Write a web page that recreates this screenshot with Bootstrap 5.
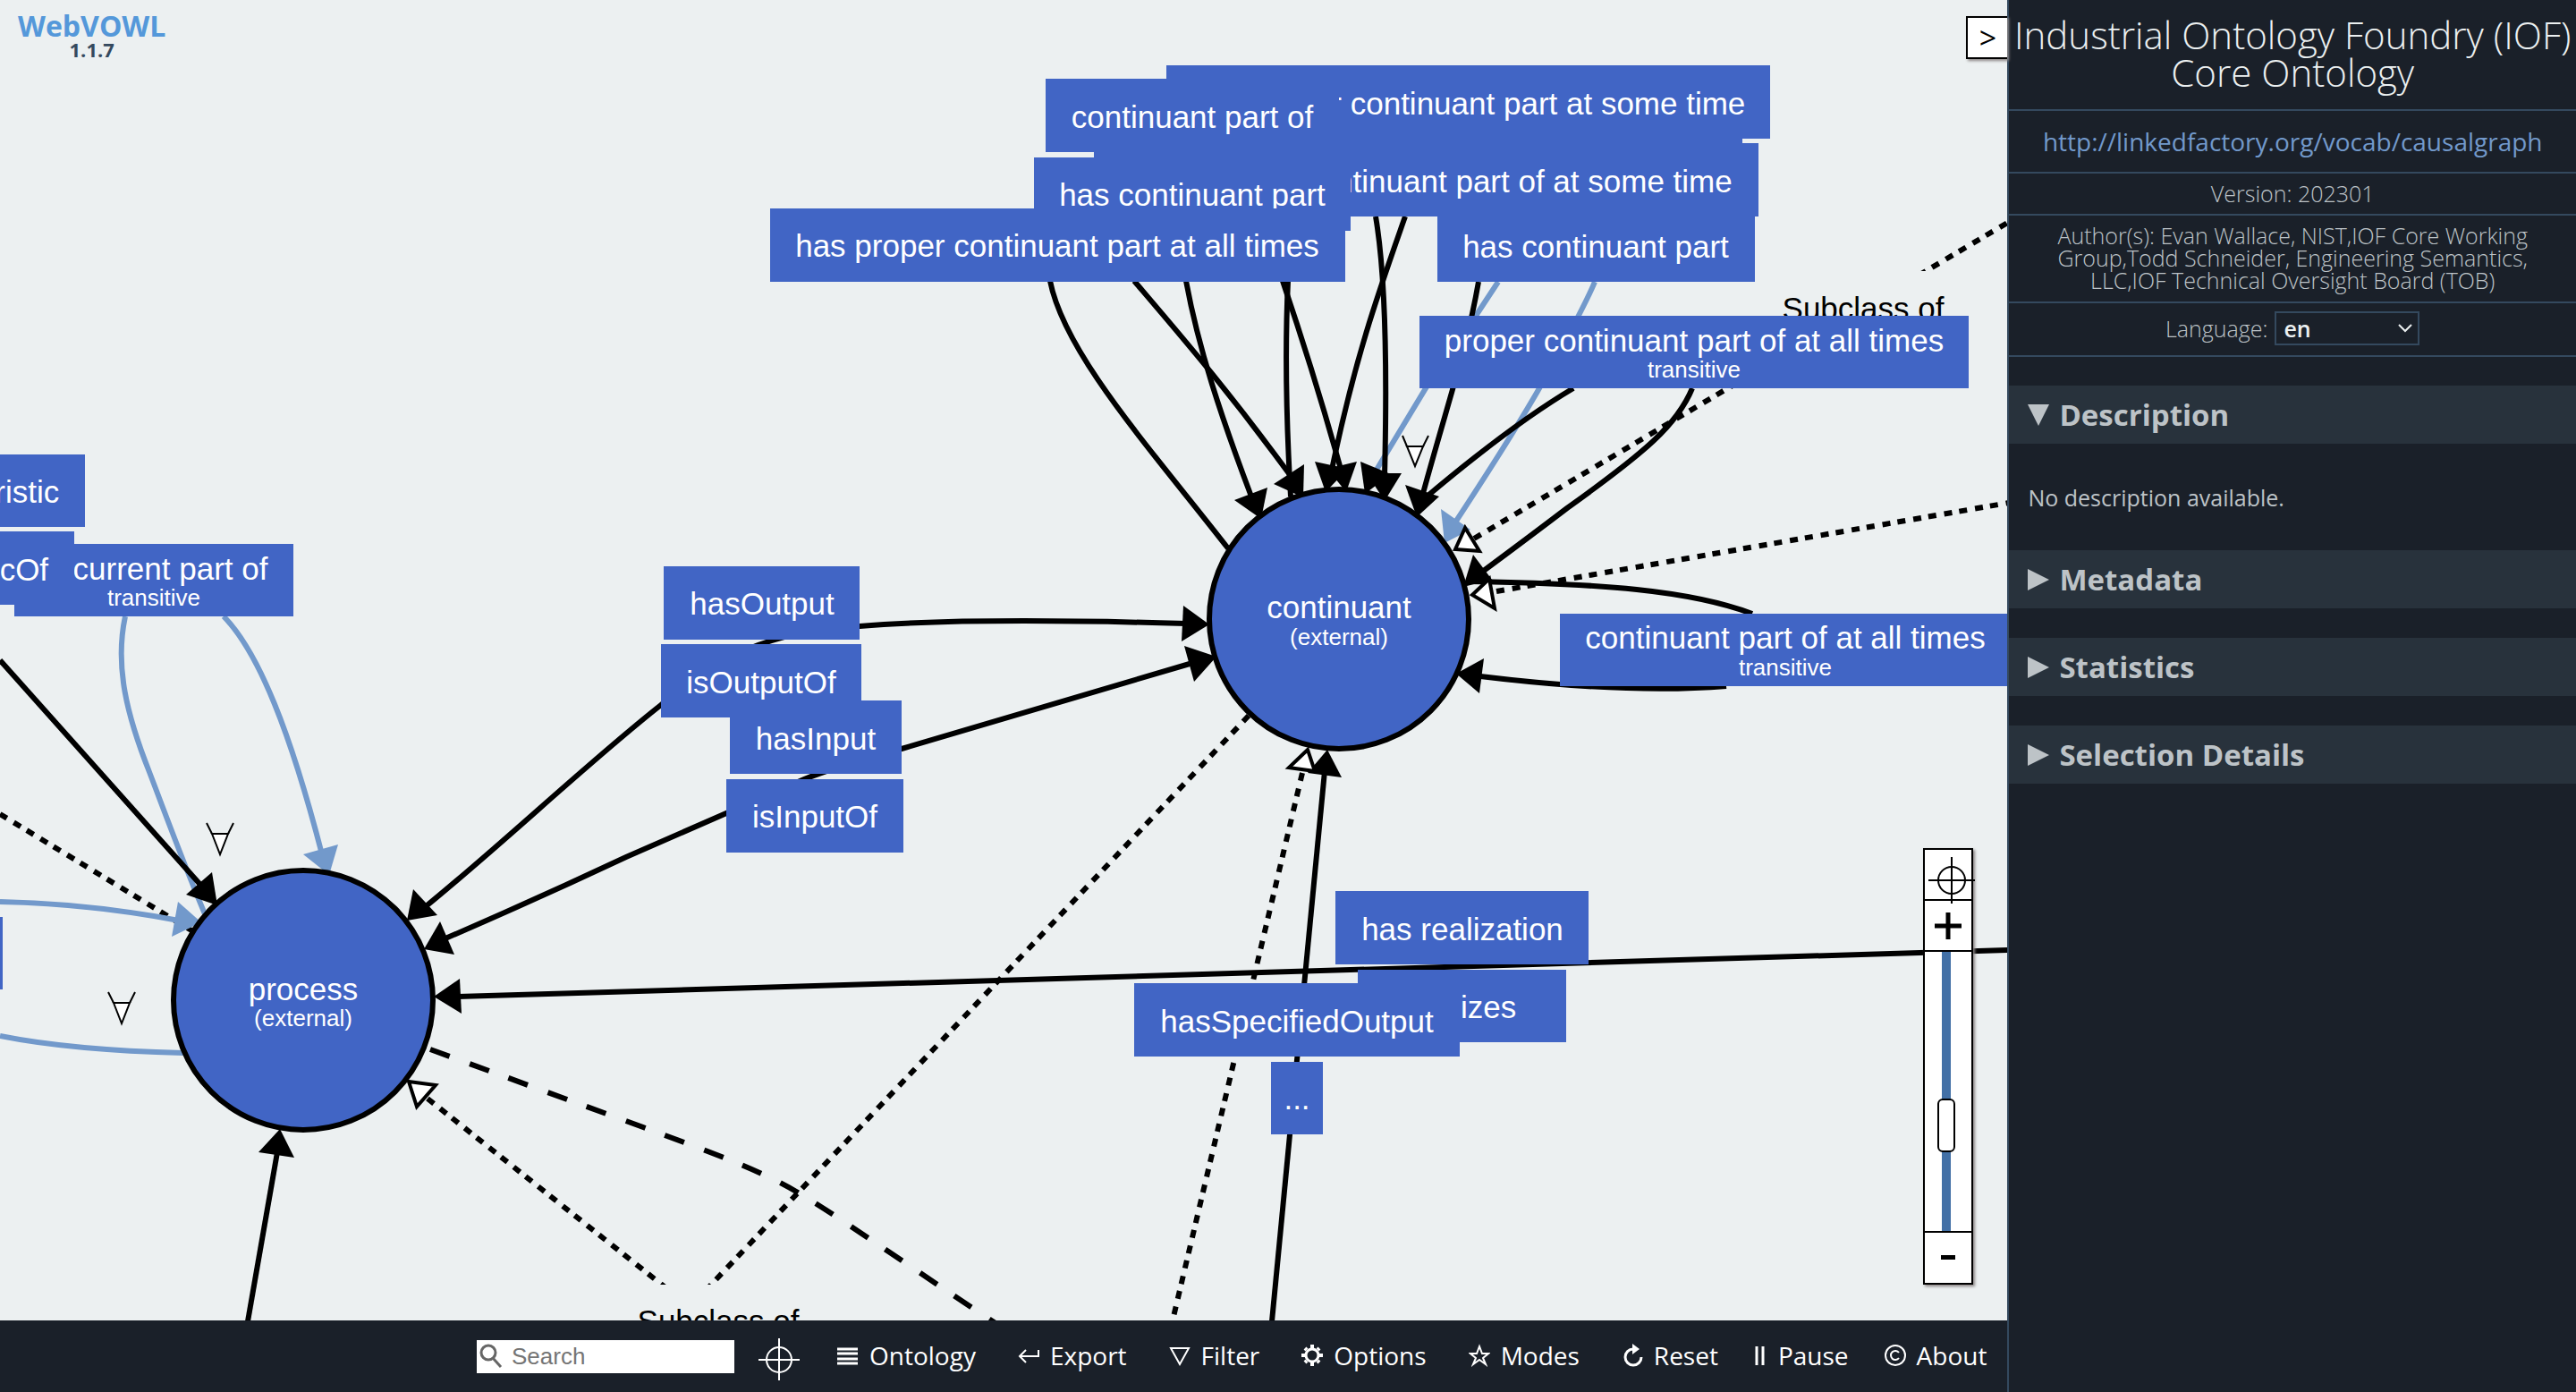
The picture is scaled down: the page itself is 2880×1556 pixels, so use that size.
<!DOCTYPE html>
<html lang="en">
<head>
<meta charset="utf-8">
<meta name="viewport" content="width=device-width, initial-scale=1">
<title>WebVOWL</title>
<link rel="stylesheet" href="https://cdn.jsdelivr.net/npm/bootstrap@5.3.0/dist/css/bootstrap.min.css">
<style>
  body { font-family: "Open Sans", "Noto Sans", sans-serif; background: #1a2029; }
  .canvas-area { background: #ecf0f1; min-width: 0; }
  .vowl-graph { display: block; width: 100%; height: 100%; font-family: "Liberation Sans", Arial, sans-serif; font-size: 35px; text-anchor: middle; }
  .vowl-graph .edge path { fill: none; stroke: #000; stroke-width: 6; }
  .vowl-graph .edge .import { stroke: #7299cb; }
  .vowl-graph .edge .sub { stroke-dasharray: 9 9 9 8; }
  .vowl-graph .edge .disjoint { stroke-dasharray: 23 24 23 23; }
  .vowl-graph .open { fill: #fff; stroke: #000; stroke-width: 4; }
  .vowl-graph .quant { fill: #fff; stroke: #000; stroke-width: 2; }
  .vowl-graph circle { fill: #4165c5; stroke: #000; stroke-width: 6; }
  .vowl-graph rect { fill: #4165c5; }
  .vowl-graph .lbl text { fill: #fff; }
  .vowl-graph .plain rect { fill: #ecf0f1; }
  .vowl-graph .tiny { font-size: 26px; }
  .brand { top: 13px; left: 20px; line-height: 1; }
  .brand a { font-size: 32px; font-weight: 700; color: #5498da; line-height: 32px; }
  .brand span { font-size: 22px; font-weight: 700; color: #34495e; line-height: 20px; }
  .toggle-btn { top: 18px; right: 0; width: 46px; height: 48px; background: #fff; border: 2px solid #000; border-right: 0; box-shadow: 2px 2px 3px #8a8484; font-size: 34px; line-height: 1; color: #000; }
  .zoomer { top: 948px; right: 38px; width: 56px; background: #fff; border: 2px solid #000; box-shadow: 2px 2px 3px #8a8484; }
  .zoomer button { height: 57px; background: none; border: 0; border-bottom: 2px solid #000; color: #000; line-height: 0; }
  .zoomer .zoom-out { border-bottom: 0; border-top: 2px solid #000; height: 58px; }
  .zoomer svg { overflow: visible; }
  .track-box { height: 312px; }
  .track-box input { position: absolute; left: 24px; top: 50%; width: 312px; height: 24px; margin: 0; appearance: none; -webkit-appearance: none; background: none; transform: translate(-50%, -50%) rotate(-90deg); }
  .track-box input::-webkit-slider-runnable-track { height: 10px; background: #4270a6; }
  .track-box input::-webkit-slider-thumb { -webkit-appearance: none; width: 60px; height: 20px; margin-top: -5px; background: #fff; border: 2px solid #000; border-radius: 6px; }
  .menu-bar { height: 80px; background: #1a2029; padding-right: 23px; }
  .search-box { position: relative; width: 288px; }
  .search-box input { width: 100%; height: 37px; border: 0; border-radius: 0; padding: 0 0 0 39px; font: 26px "Liberation Sans", Arial, sans-serif; background: #fff; }
  .search-box input::placeholder { color: #757575; opacity: 1; }
  .search-box svg { position: absolute; left: 3px; top: 4px; }
  .locate { margin: 0 42px 0 27px; background: none; border: 0; padding: 6px 0 0; line-height: 0; }
  .menu-list { gap: 47px; padding-bottom: 2px; }
  .menu-list.late { gap: 40px; margin-left: 41px; }
  .menu-list a { color: #fff; font-size: 28px; line-height: 40px; gap: 12px; }
  .menu-list svg { fill: none; stroke: #fff; stroke-width: 2; }
  .side { flex: 0 0 calc(22% + 2px); background: #1a2029; border-left: 2px solid #34495e; color: #bdc3c7; }
  .side .cell { border-bottom: 2px solid #34495e; text-align: center; }
  .side h1 { font-size: 42px; font-weight: 300; line-height: 42px; color: #ecf0f1; margin: 0; padding: 18px 0 20px; }
  .side .iri a { color: #7299cb; font-size: 28px; line-height: 68px; }
  .side .fine { font-size: 25px; font-weight: 300; line-height: 25px; }
  .side .ver { padding: 10px 0; }
  .side .auth { padding: 10px 40px 11px; }
  .side .lang { padding: 9px 0 11px; gap: 8px; }
  .side select { width: 162px; height: 38px; appearance: none; -webkit-appearance: none; border: 2px solid #34495e; background: #1a2029; color: #ecf0f1; font: 600 25px/1 "Open Sans", sans-serif; padding: 0 8px; }
  .pick { position: relative; }
  .pick svg { position: absolute; right: 8px; top: 13px; pointer-events: none; }
  .panel-head { width: 100%; height: 65px; border: 0; background: #28323c; color: #bdc3c7; font-size: 33px; font-weight: 700; line-height: 1; padding: 0 0 0 21px; gap: 11px; }
  .acc { gap: 33px; margin-top: 32px; }
  .panel-text { font-size: 25px; line-height: 40px; padding: 40px 21px 39px; margin: 0; }
  .acc .first { display: block; margin-bottom: -33px; }
</style>
</head>
<body>
<div class="d-flex vh-100 overflow-hidden">
  <main class="d-flex flex-column flex-grow-1 canvas-area position-relative">
    <div class="flex-grow-1 overflow-hidden">
      <svg class="vowl-graph" role="img" aria-label="Ontology graph">
        <g class="edge">
          <path class="sub" d="M1648 602L2246 248"/>
          <path class="sub" d="M1673 661L2246 562"/>
          <path class="sub" d="M1396 800L780 1452"/>
          <path class="sub" d="M478 1228L760 1452"/>
          <path class="sub" d="M1456 864L1311 1476"/>
          <path class="sub" d="M0 910L214 1040"/>
          <path class="disjoint" d="M481 1173L719 1260C800 1290 850 1308 892 1333S972 1385 1087 1462L1116 1481"/>
          <path class="import" d="M1675 315L1650 353L1594 434L1539 525"/>
          <path class="import" d="M1783 315Q1770 346 1721 434Q1690 488 1625 587"/>
          <path class="import" d="M140 689C128 745 142 800 167 863C185 910 205 965 230 1024"/>
          <path class="import" d="M250 689C290 730 325 820 360 955"/>
          <path class="import" d="M0 1008Q100 1010 200 1029"/>
          <path class="import" d="M0 1158Q80 1174 205 1177"/>
          <path d="M1174 314C1190 395 1285 500 1373 613"/>
          <path d="M1268 314C1320 375 1372 435 1443 532"/>
          <path d="M1326 314C1340 390 1365 465 1399 555"/>
          <path d="M1440 314Q1435 420 1443 555"/>
          <path d="M1434 314Q1470 420 1500 528"/>
          <path d="M1571 242C1540 330 1515 400 1489 525"/>
          <path d="M1538 242Q1553 330 1548 532"/>
          <path d="M1653 315C1640 390 1620 445 1590 555"/>
          <path d="M1759 434Q1690 475 1594 556"/>
          <path d="M1892 434C1875 475 1840 505 1752 568Q1710 600 1656 640"/>
          <path d="M1640 650C1790 652 1890 660 1959 686"/>
          <path d="M1655 756Q1820 776 1930 767"/>
          <path d="M475 1014C560 945 660 850 739 788C800 735 860 705 961 700Q1080 690 1326 697"/>
          <path d="M498 1049Q600 1005 700 958L899 871C940 855 980 845 1008 837L1330 742"/>
          <path d="M512 1114Q1380 1090 2246 1062"/>
          <path d="M1481 862L1422 1477"/>
          <path d="M310 1288L277 1477"/>
          <path d="M0 738L225 990"/>
        </g>
        <g>
          <path d="M1410 580L1380 559L1417 545Z"/>
          <path d="M1457 556L1424 541L1458 519Z"/>
          <path d="M1482 550L1470 516L1507 524Z"/>
          <path d="M1505 550L1484 524L1517 516Z"/>
          <path d="M1526 552L1521 516L1555 530Z"/>
          <path d="M1548 560L1528 529L1567 529Z"/>
          <path d="M1584 578L1571 542L1609 555Z"/>
          <path d="M1636 656L1647 620L1668 648Z"/>
          <path d="M1628 753L1659 736L1654 775Z"/>
          <path d="M1352 698L1323 677L1321 717Z"/>
          <path d="M1360 734L1324 722L1335 762Z"/>
          <path d="M1484 838L1500 869L1462 864Z"/>
          <path d="M455 1029L462 994L489 1023Z"/>
          <path d="M474 1061L492 1030L508 1067Z"/>
          <path d="M485 1114L514 1094L516 1133Z"/>
          <path d="M313 1262L289 1288L329 1294Z"/>
          <path d="M243 1012L208 1000L237 975Z"/>
          <path fill="#7299cb" d="M1615 607L1611 569L1644 592Z"/>
          <path fill="#7299cb" d="M368 978L339 955L378 944Z"/>
          <path fill="#7299cb" d="M225 1031L199 1008L192 1047Z"/>
          <path class="open" d="M1627 614L1638 590L1654 616Z"/>
          <path class="open" d="M1646 665L1665 647L1671 680Z"/>
          <path class="open" d="M1462 838L1441 858L1470 862Z"/>
          <path class="open" d="M457 1209L487 1213L466 1237Z"/>
          <g class="quant">
            <path d="M1573 499L1582 521L1591 499Z"/><path fill="none" d="M1568 487L1573 499M1597 487L1591 499"/>
            <path d="M237 932L246 955L255 932Z"/><path fill="none" d="M231 920L237 932M261 920L255 932"/>
            <path d="M127 1121L136 1144L145 1121Z"/><path fill="none" d="M121 1109L127 1121M151 1109L145 1121"/>
          </g>
        </g>
        <g class="lbl">
          <circle cx="1497" cy="692" r="145"/><text x="1497" y="691">continuant</text><text class="tiny" x="1497" y="721">(external)</text>
          <circle cx="339" cy="1118" r="145"/><text x="339" y="1118">process</text><text class="tiny" x="339" y="1147">(external)</text>
        </g>
        <g class="plain">
          <rect x="1965" y="303" width="236" height="82"/><text x="2083" y="357">Subclass of</text>
          <rect x="686" y="1436" width="236" height="82"/><text x="803" y="1489">Subclass of</text>
        </g>
        <g class="lbl">
          <rect x="1223" y="130" width="725" height="82"/>
          <rect x="1304" y="73" width="675" height="82"/><text x="1642" y="128">has proper continuant part at some time</text>
          <rect x="1607" y="233" width="355" height="82"/><text x="1784" y="288">has continuant part</text>
          <rect x="1316" y="160" width="650" height="82"/><text x="1641" y="215">proper continuant part of at some time</text>
          <rect x="1169" y="88" width="328" height="82"/><text x="1333" y="143">continuant part of</text>
          <rect x="1156" y="176" width="354" height="82"/><text x="1333" y="230">has continuant part</text>
          <rect x="861" y="233" width="643" height="82"/><text x="1182" y="287">has proper continuant part at all times</text>
          <rect x="1587" y="353" width="614" height="81"/><text x="1894" y="393">proper continuant part of at all times</text><text class="tiny" x="1894" y="422">transitive</text>
          <rect x="1744" y="686" width="504" height="81"/><text x="1996" y="725">continuant part of at all times</text><text class="tiny" x="1996" y="755">transitive</text>
          <rect x="742" y="633" width="219" height="82"/><text x="852" y="687">hasOutput</text>
          <rect x="739" y="720" width="224" height="82"/><text x="851" y="775">isOutputOf</text>
          <rect x="816" y="783" width="192" height="82"/><text x="912" y="838">hasInput</text>
          <rect x="812" y="871" width="198" height="82"/><text x="911" y="925">isInputOf</text>
          <rect x="1493" y="996" width="283" height="82"/><text x="1635" y="1051">has realization</text>
          <rect x="1518" y="1084" width="233" height="81"/><text x="1635" y="1138">realizes</text>
          <rect x="1268" y="1099" width="364" height="82"/><text x="1450" y="1154">hasSpecifiedOutput</text>
          <rect x="1421" y="1187" width="58" height="81"/><text x="1450" y="1240">...</text>
          <rect x="-234" y="508" width="329" height="81"/><text x="-69" y="562">hasCharacteristic</text>
          <rect x="16" y="608" width="312" height="81"/><text x="172" y="648">occurrent part of</text><text class="tiny" x="172" y="677">transitive</text>
          <rect x="-252" y="594" width="335" height="82"/><text x="-84" y="649">isCharacteristicOf</text>
          <rect x="-60" y="1025" width="63" height="81"/>
        </g>
      </svg>
    </div>

    <div class="brand position-absolute d-flex flex-column align-items-center">
      <a href="#" class="text-decoration-none">WebVOWL</a>
      <span>1.1.7</span>
    </div>
    <button type="button" class="toggle-btn position-absolute p-0" aria-label="Collapse sidebar">&gt;</button>

    <div class="zoomer position-absolute d-flex flex-column">
      <button type="button" class="p-0" aria-label="Center graph">
        <svg width="52" height="52" viewBox="0 0 52 52" fill="none" stroke="#000" stroke-width="2"><circle cx="30" cy="32" r="15"/><path d="M30 6V58M4 32H56"/></svg>
      </button>
      <button type="button" class="p-0" aria-label="Zoom in">
        <svg width="30" height="30" viewBox="0 0 30 30" stroke="#000" stroke-width="5"><path d="M15 0V30M0 15H30"/></svg>
      </button>
      <div class="track-box position-relative"><input type="range" aria-label="Zoom" min="0" max="100" value="35"></div>
      <button type="button" class="zoom-out p-0" aria-label="Zoom out">
        <svg width="16" height="6" viewBox="0 0 16 6"><path d="M0 0H16V5H0Z"/></svg>
      </button>
    </div>

    <nav class="menu-bar d-flex align-items-center justify-content-end flex-shrink-0" aria-label="Graph menu">
      <div class="search-box">
        <svg width="28" height="28" viewBox="0 0 28 28" fill="none" stroke="#666"><circle cx="10" cy="10" r="8" stroke-width="3"/><path d="M15 16L24 26" stroke-width="3"/></svg>
        <input type="text" placeholder="Search" aria-label="Search">
      </div>
      <button type="button" class="locate" aria-label="Locate">
        <svg width="46" height="48" viewBox="0 0 46 48" fill="none" stroke="#fff" stroke-width="2"><circle cx="23" cy="25" r="14"/><path d="M23 1V48M0 25H46"/></svg>
      </button>
      <ul class="menu-list list-unstyled d-flex mb-0">
        <li><a href="#" class="d-flex align-items-center text-decoration-none"><svg width="24" height="26"><path d="M0 6H23M0 11H23M0 17H23M0 22H23" stroke-width="3"/></svg>Ontology</a></li>
        <li><a href="#" class="d-flex align-items-center text-decoration-none"><svg width="24" height="26"><path d="M23 7V14H3M9 7L2 14L9 21"/></svg>Export</a></li>
        <li><a href="#" class="d-flex align-items-center text-decoration-none"><svg width="24" height="26"><path d="M2 5H22L12 23Z"/></svg>Filter</a></li>
        <li><a href="#" class="d-flex align-items-center text-decoration-none"><svg width="24" height="26"><circle cx="12" cy="13" r="7" stroke-width="3"/><path stroke-width="4" d="M12 5V1M12 25V21M4 13H0M20 13H24M6 7L4 5M18 7L20 5M6 19L4 21M18 19L20 21"/></svg>Options</a></li>
        <li><a href="#" class="d-flex align-items-center text-decoration-none"><svg width="24" height="26"><path d="M12 3L15 11H22L16 16L19 23L12 18L5 23L8 16L2 11H9Z"/></svg>Modes</a></li>
        <li><a href="#" class="d-flex align-items-center text-decoration-none"><svg width="24" height="26"><path stroke-width="3" d="M13 6A9 9 0 1 0 22 15"/><path fill="#fff" stroke="none" d="M12 0L20 6L12 12Z"/></svg>Reset</a></li>
      </ul>
      <ul class="menu-list late list-unstyled d-flex mb-0">
        <li><a href="#" class="d-flex align-items-center text-decoration-none"><svg width="14" height="26"><path d="M2 3V24M9 3V24" stroke-width="3"/></svg>Pause</a></li>
        <li><a href="#" class="d-flex align-items-center text-decoration-none"><svg width="24" height="26"><circle cx="12" cy="13" r="11"/><path d="M16 10A5 5 0 1 0 16 16"/></svg>About</a></li>
      </ul>
    </nav>
  </main>

  <aside class="side">
    <div class="cell"><h1>Industrial Ontology Foundry (IOF) Core Ontology</h1></div>
    <div class="cell iri"><a href="http://linkedfactory.org/vocab/causalgraph" class="d-block text-decoration-none">http://linkedfactory.org/vocab/causalgraph</a></div>
    <div class="cell fine ver">Version: 202301</div>
    <div class="cell fine auth">Author(s): Evan Wallace, NIST,IOF Core Working Group,Todd Schneider, Engineering Semantics, LLC,IOF Technical Oversight Board (TOB)</div>
    <div class="cell fine lang d-flex align-items-center justify-content-center">
      <label for="language">Language:</label>
      <span class="pick d-flex"><select id="language"><option>en</option></select>
        <svg width="16" height="12" viewBox="0 0 16 12" fill="none" stroke="#ecf0f1" stroke-width="2"><path d="M1 2L8 9L15 2"/></svg></span>
    </div>
    <div class="acc d-flex flex-column">
      <section class="first">
        <button type="button" class="panel-head d-flex align-items-center"><svg width="24" height="24" fill="#bdc3c7"><path d="M0 0H24L12 24Z"/></svg>Description</button>
        <p class="panel-text">No description available.</p>
      </section>
      <button type="button" class="panel-head d-flex align-items-center"><svg width="24" height="24" fill="#bdc3c7"><path d="M0 0L24 12L0 24Z"/></svg>Metadata</button>
      <button type="button" class="panel-head d-flex align-items-center"><svg width="24" height="24" fill="#bdc3c7"><path d="M0 0L24 12L0 24Z"/></svg>Statistics</button>
      <button type="button" class="panel-head d-flex align-items-center"><svg width="24" height="24" fill="#bdc3c7"><path d="M0 0L24 12L0 24Z"/></svg>Selection Details</button>
    </div>
  </aside>
</div>
<script src="https://cdn.jsdelivr.net/npm/bootstrap@5.3.0/dist/js/bootstrap.bundle.min.js"></script>
</body>
</html>
